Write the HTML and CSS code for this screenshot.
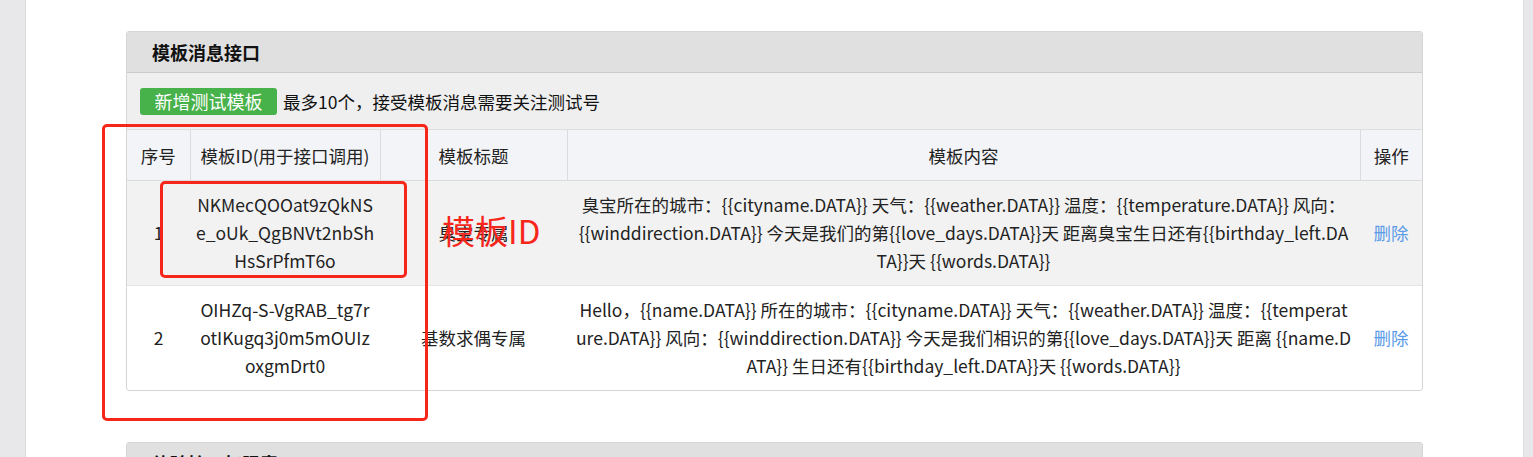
FILE: index.html
```html
<!DOCTYPE html>
<html lang="zh-CN">
<head>
<meta charset="utf-8">
<title>模板消息接口</title>
<link rel="stylesheet" href="styles.css">
</head>
<body>
<div class="page">
  <aside class="side-left"></aside>
  <main class="main">
    <section class="panel">
      <div class="panel-head">模板消息接口</div>
      <div class="toolbar">
        <button class="btn-green">新增测试模板</button>
        <span class="tip">最多10个，接受模板消息需要关注测试号</span>
      </div>
      <table class="tpl-table">
        <colgroup>
          <col class="c-no"><col class="c-id"><col class="c-title"><col class="c-content"><col class="c-op">
        </colgroup>
        <thead>
          <tr><th>序号</th><th>模板ID(用于接口调用)</th><th>模板标题</th><th>模板内容</th><th>操作</th></tr>
        </thead>
        <tbody>
          <tr class="row-hover">
            <td>1</td>
            <td class="id">NKMecQOOat9zQkNSe_oUk_QgBNVt2nbShHsSrPfmT6o</td>
            <td>臭宝专属</td>
            <td class="content">臭宝所在的城市：{{cityname.DATA}} 天气：{{weather.DATA}} 温度：{{temperature.DATA}} 风向：{{winddirection.DATA}} 今天是我们的第{{love_days.DATA}}天 距离臭宝生日还有{{birthday_left.DATA}}天 {{words.DATA}}</td>
            <td><a class="del">删除</a></td>
          </tr>
          <tr>
            <td>2</td>
            <td class="id">OIHZq-S-VgRAB_tg7rotIKugq3j0m5mOUIzoxgmDrt0</td>
            <td>基数求偶专属</td>
            <td class="content">Hello，{{name.DATA}} 所在的城市：{{cityname.DATA}} 天气：{{weather.DATA}} 温度：{{temperature.DATA}} 风向：{{winddirection.DATA}} 今天是我们相识的第{{love_days.DATA}}天 距离 {{name.DATA}} 生日还有{{birthday_left.DATA}}天 {{words.DATA}}</td>
            <td><a class="del">删除</a></td>
          </tr>
        </tbody>
      </table>
      <div class="mark mark-outer"></div>
      <div class="mark mark-inner"></div>
      <div class="mark-label">模板ID</div>
    </section>
    <section class="panel panel-next">
      <div class="panel-head">体验接口权限表</div>
    </section>
  </main>
  <aside class="side-right"></aside>
</div>
</body>
</html>
```
FILE: styles.css
```css
html, body {
  margin: 0;
  padding: 0;
  height: 100%;
  overflow: hidden;
  background: #fff;
}
body {
  font-family: "Noto Sans CJK SC", "Noto Sans", sans-serif;
  font-size: 18px;
  color: #222;
}
.page {
  display: flex;
  height: 457px;
}
.side-left {
  width: 25px;
  flex: none;
  background: #e8e8eb;
  border-right: 1px solid #dcdcdf;
}
.side-right {
  width: 9px;
  flex: none;
  background: #e8e8eb;
  border-left: 1px solid #dcdcdf;
}
.main {
  flex: 1;
  padding: 31px 100px 0 100px;
}
.panel {
  position: relative;
  border: 1px solid #d6d6d6;
  border-radius: 3px;
  background: #fff;
}
.panel-next {
  margin-top: 51px;
}
.panel-head {
  height: 40px;
  line-height: 40px;
  padding-left: 25px;
  background: #e0e0e0;
  border-bottom: 1px solid #cccccc;
  font-weight: bold;
  font-size: 18px;
  color: #111;
}
.toolbar {
  display: flex;
  align-items: center;
  height: 56px;
  padding-left: 13px;
  background: #efefef;
  border-bottom: 1px solid #dddddd;
}
.btn-green {
  height: 27px;
  width: 137px;
  padding: 0;
  border: none;
  border-radius: 3px;
  background: #47b14a;
  color: #fff;
  font-family: inherit;
  font-size: 18px;
  line-height: 27px;
}
.tip {
  margin-left: 6px;
  font-size: 17.5px;
  color: #111;
}
.tpl-table {
  width: 100%;
  border-collapse: collapse;
  table-layout: fixed;
  font-size: 17.5px;
}
.c-no { width: 63px; }
.c-id { width: 190px; }
.c-title { width: 187px; }
.c-op { width: 62px; }
.tpl-table th {
  height: 50px;
  padding: 0;
  font-weight: normal;
  background: #f3f4f7;
  border-left: 1px solid #dcdcdc;
  border-bottom: 1px solid #dcdcdc;
  text-align: center;
  color: #222;
}
.tpl-table th:first-child { border-left: none; }
.tpl-table td {
  padding: 10px 9px;
  line-height: 28px;
  text-align: center;
  vertical-align: middle;
  border-bottom: 1px solid #e3e3e3;
  word-break: break-all;
}
.tpl-table tbody tr:last-child td { border-bottom: none; }
.tpl-table td.id {
  padding: 10px 5.5px;
}
.tpl-table td.content {
  padding: 10px 8px;
}
.row-hover td { background: #f2f2f2; }
.del {
  color: #5b9be8;
  cursor: pointer;
}
.mark {
  position: absolute;
  border: 3px solid #f7261b;
  border-radius: 5px;
  pointer-events: none;
}
.mark-outer {
  left: -25px;
  top: 92px;
  width: 320px;
  height: 291px;
}
.mark-inner {
  left: 33px;
  top: 149px;
  width: 241px;
  height: 91px;
}
.mark-label {
  position: absolute;
  left: 315px;
  top: 178px;
  font-size: 33px;
  line-height: 40px;
  color: #f7261b;
  pointer-events: none;
}
```
